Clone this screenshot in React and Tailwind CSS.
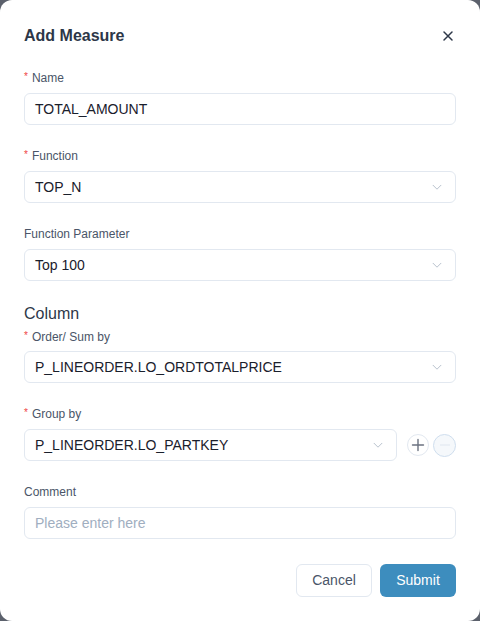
import React from "react";

function Chevron() {
  return (
    <svg width="14" height="14" viewBox="0 0 16 16" fill="none" className="shrink-0">
      <path d="M3.5 6l4.5 4.5L12.5 6" stroke="#b6bfcc" strokeWidth="1.1" strokeLinecap="round" strokeLinejoin="round" />
    </svg>
  );
}

function Label({ required, children, className = "" }) {
  return (
    <div className={"flex items-center h-4 text-[12px] leading-4 text-[#4a5568] " + className}>
      {required && <span className="text-[#ef4444] text-[10px] mr-1 -mt-[3px]">*</span>}
      <span>{children}</span>
    </div>
  );
}

function Select({ value, className = "" }) {
  return (
    <div className={"h-8 flex items-center justify-between rounded-md border border-[#e2e8f0] pl-[10px] pr-[11px] text-[14px] text-[#1a202c] " + className}>
      <span>{value}</span>
      <Chevron />
    </div>
  );
}

export default function App() {
  return (
    <div className="w-[480px] h-[621px] bg-[#5c616c]" style={{ fontFamily: '"Liberation Sans", Arial, sans-serif' }}>
      <div className="w-full h-full bg-white rounded-[12px] px-6 pt-[25px] flex flex-col">
        <div className="flex items-center justify-between h-[22px]">
          <div className="text-[16px] font-bold text-[#2d3748] leading-[22px]">Add Measure</div>
          <svg width="14" height="14" viewBox="0 0 14 14" className="mr-[1px]">
            <path d="M3 3l8 8M11 3l-8 8" stroke="#2d3748" strokeWidth="1.5" strokeLinecap="round" />
          </svg>
        </div>

        <Label required className="mt-[23px]">Name</Label>
        <div className="mt-[7px] h-8 flex items-center rounded-md border border-[#e2e8f0] pl-[10px] text-[14px] text-[#1a202c]">
          TOTAL_AMOUNT
        </div>

        <Label required className="mt-[23px]">Function</Label>
        <Select value="TOP_N" className="mt-[7px]" />

        <Label className="mt-[23px]">Function Parameter</Label>
        <Select value="Top 100" className="mt-[7px]" />

        <div className="mt-[21px] h-6 leading-6 text-[16px] text-[#2d3748]">Column</div>
        <Label required className="mt-[3px]">Order/ Sum by</Label>
        <Select value="P_LINEORDER.LO_ORDTOTALPRICE" className="mt-[6px]" />

        <Label required className="mt-[23px]">Group by</Label>
        <div className="mt-[7px] flex items-center">
          <Select value="P_LINEORDER.LO_PARTKEY" className="flex-1" />
          <div className="ml-[10px] w-[22px] h-[22px] rounded-full border border-[#e2e8f0] flex items-center justify-center">
            <svg width="14" height="14" viewBox="0 0 14 14">
              <path d="M7 1.5v11M1.5 7h11" stroke="#6b7280" strokeWidth="1.4" strokeLinecap="round" />
            </svg>
          </div>
          <div className="ml-[4px] w-[23px] h-[23px] rounded-full border border-[#cfdeee] bg-[#f5f8fb] flex items-center justify-center">
            <svg width="14" height="14" viewBox="0 0 14 14">
              <path d="M2 7h10" stroke="#e3eaf2" strokeWidth="1.2" />
            </svg>
          </div>
        </div>

        <Label className="mt-[23px]">Comment</Label>
        <div className="mt-[7px] h-8 flex items-center rounded-md border border-[#e2e8f0] pl-[10px] text-[14px] text-[#a0aec0]">
          Please enter here
        </div>

        <div className="mt-[25px] flex justify-end gap-2">
          <div className="w-[76px] h-[33px] rounded-md border border-[#e2e8f0] flex items-center justify-center text-[14px] text-[#4a5568]">
            Cancel
          </div>
          <div className="w-[76px] h-[33px] rounded-md bg-[#3d8dbe] flex items-center justify-center text-[14px] text-white">
            Submit
          </div>
        </div>
      </div>
    </div>
  );
}
